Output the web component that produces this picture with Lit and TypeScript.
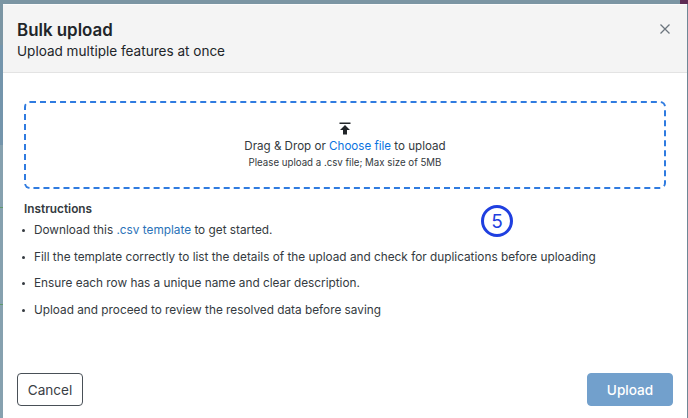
import { LitElement, html, css } from "lit";
import { customElement } from "lit/decorators.js";

@customElement("app-root")
export class AppRoot extends LitElement {
  static styles = css`
    :host {
      display: block;
      width: 688px;
      height: 418px;
      overflow: hidden;
      background: #7b95a3;
      font-family: Inter, "Liberation Sans", sans-serif;
      color: #212529;
    }
    .backdrop {
      height: 418px;
      box-sizing: border-box;
      padding: 4px 1px 0 3px;
      position: relative;
      background:
        linear-gradient(#5f2b55, #5f2b55) 680px 0 / 8px 4px no-repeat,
        linear-gradient(#6e8796, #6e8796) 687px 0 / 1px 418px no-repeat,
        linear-gradient(
            #7b95a3 0 45px,
            #7495ac 45px 145px,
            #86a1af 145px 207px,
            #5f9a6c 207px 208px,
            #86a1af 208px 304px,
            #5f9a6c 304px 305px,
            #86a1af 305px
          )
          0 0 / 3px 418px no-repeat;
    }
    .modal {
      height: 414px;
      background: #fff;
      border-radius: 3px 3px 0 0;
      display: flex;
      flex-direction: column;
      position: relative;
    }
    .header {
      height: 69px;
      box-sizing: border-box;
      flex: none;
      background: #f4f4f4;
      border-top: 1px solid #fbfbfb;
      border-bottom: 1px solid #e3e3e3;
      padding: 16px 14px 0;
      display: flex;
      justify-content: space-between;
      align-items: flex-start;
    }
    .title {
      font-size: 16.9px;
      font-weight: 600;
      line-height: 19px;
      color: #212529;
    }
    .subtitle {
      font-size: 13.55px;
      line-height: 20px;
      margin-top: 1px;
      color: #212529;
    }
    .close {
      width: 10px;
      height: 10px;
      margin: 3px 3px 0 0;
      display: block;
    }
    .body {
      flex: 1;
      padding: 28px 21px 0;
      display: flex;
      flex-direction: column;
    }
    .drop {
      height: 88px;
      box-sizing: border-box;
      border: 2px dashed #2f7be0;
      border-radius: 6px;
      display: flex;
      flex-direction: column;
      align-items: center;
      padding-top: 19px;
    }
    .drop svg {
      width: 12px;
      height: 13px;
      display: block;
    }
    .drop-main {
      font-size: 11.6px;
      line-height: 16px;
      margin-top: 3px;
      color: #343a40;
    }
    .drop-main a {
      color: #0b73e0;
    }
    .drop-sub {
      font-size: 9.7px;
      line-height: 14px;
      margin-top: 2px;
      color: #343a40;
    }
    .instructions {
      margin-top: 13px;
      font-size: 11.8px;
      line-height: 15px;
      color: #343a40;
    }
    .instructions h4 {
      margin: 0 0 6px;
      font-size: 11.8px;
      line-height: 15px;
      font-weight: 600;
    }
    ul {
      margin: 0;
      padding: 0 0 0 10px;
      list-style: none;
    }
    li {
      margin-bottom: 11.7px;
      position: relative;
    }
    li::before {
      content: "";
      position: absolute;
      left: -12px;
      top: 6px;
      width: 3px;
      height: 3px;
      border-radius: 50%;
      background: #343a40;
    }
    li a {
      color: #2a72b8;
    }
    .footer {
      flex: none;
      height: 45px;
      padding: 0 14px;
      display: flex;
      justify-content: space-between;
      align-items: flex-start;
    }
    button {
      font-family: inherit;
      font-size: 13.6px;
      height: 33px;
      box-sizing: border-box;
      border-radius: 4px;
      padding: 0;
    }
    .cancel {
      width: 66px;
      background: #fff;
      border: 1px solid #495057;
      color: #3a4046;
    }
    .upload {
      width: 86px;
      background: #72a0cc;
      border: 1px solid #72a0cc;
      color: #fff;
      font-weight: 500;
    }
    .badge {
      position: absolute;
      left: 481px;
      top: 205px;
      width: 32px;
      height: 32px;
      box-sizing: border-box;
      border: 3px solid #1f3fe0;
      border-radius: 50%;
      background: #fff;
      color: #1f3fe0;
      font-size: 19px;
      line-height: 28px;
      text-align: center;
    }
  `;

  render() {
    return html`
      <div class="backdrop">
        <div class="modal">
          <div class="header">
            <div>
              <div class="title">Bulk upload</div>
              <div class="subtitle">Upload multiple features at once</div>
            </div>
            <svg class="close" viewBox="0 0 10 10" fill="none" stroke="#6c757d" stroke-width="1.3">
              <path d="M0.5 0.5 L9.5 9.5 M9.5 0.5 L0.5 9.5" />
            </svg>
          </div>
          <div class="body">
            <div class="drop">
              <svg viewBox="0 0 12 13" fill="#212529">
                <path d="M0.5 0.5 H11.5 V2 H0.5 Z" />
                <path d="M6 3 L11 8 H8 V12.5 H4 V8 H1 Z" />
              </svg>
              <div class="drop-main">Drag &amp; Drop or <a>Choose file</a> to upload</div>
              <div class="drop-sub">Please upload a .csv file; Max size of 5MB</div>
            </div>
            <div class="instructions">
              <h4>Instructions</h4>
              <ul>
                <li>Download this <a>.csv template</a> to get started.</li>
                <li>Fill the template correctly to list the details of the upload and check for duplications before uploading</li>
                <li>Ensure each row has a unique name and clear description.</li>
                <li>Upload and proceed to review the resolved data before saving</li>
              </ul>
            </div>
          </div>
          <div class="footer">
            <button class="cancel">Cancel</button>
            <button class="upload">Upload</button>
          </div>
        </div>
        <div class="badge">5</div>
      </div>
    `;
  }
}
